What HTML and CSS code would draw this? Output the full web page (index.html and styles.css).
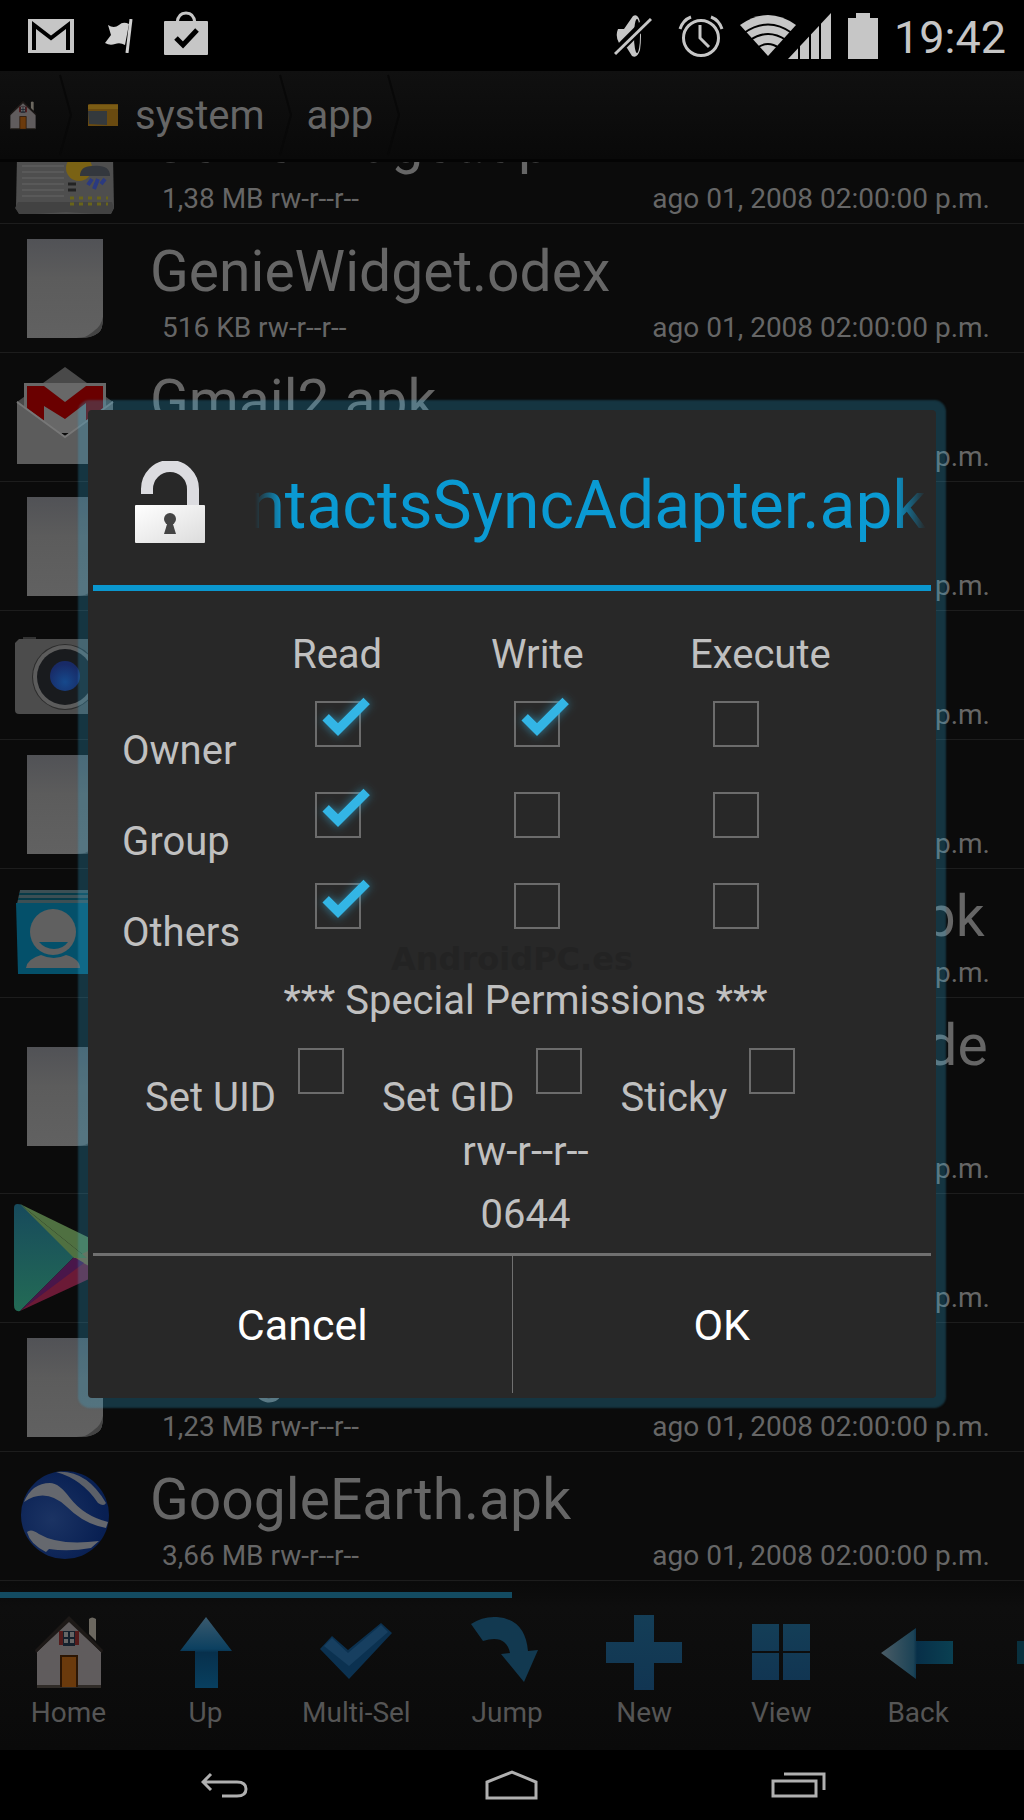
FILE: index.html
```html
<!DOCTYPE html>
<html lang="en">
<head>
  <meta charset="UTF-8">
  <meta name="viewport" content="width=device-width, initial-scale=1">
  <title>File Permissions</title>
  <link rel="stylesheet" href="styles.css">
</head>
<body>

  <!-- shared gradients and icons -->
  <svg class="defs" aria-hidden="true">
    <defs>
      <linearGradient id="paper" x1="0" y1="0" x2="0" y2="1">
        <stop offset="0" stop-color="#515256"/>
        <stop offset="0.4" stop-color="#5c5c5c"/>
        <stop offset="1" stop-color="#616161"/>
      </linearGradient>
      <linearGradient id="blueDown" x1="0" y1="0" x2="0" y2="1">
        <stop offset="0" stop-color="#3a5a6e"/>
        <stop offset="0.45" stop-color="#0c4060"/>
        <stop offset="0.5" stop-color="#07304c"/>
        <stop offset="1" stop-color="#083f5f"/>
      </linearGradient>
      <linearGradient id="blueLeft" x1="0" y1="0" x2="1" y2="0">
        <stop offset="0" stop-color="#4a5c66"/>
        <stop offset="0.45" stop-color="#1c4356"/>
        <stop offset="0.5" stop-color="#072f48"/>
        <stop offset="1" stop-color="#0a4052"/>
      </linearGradient>
      <linearGradient id="tile" x1="0" y1="0" x2="0" y2="1">
        <stop offset="0" stop-color="#143e57"/>
        <stop offset="1" stop-color="#113552"/>
      </linearGradient>
      <linearGradient id="metal" x1="0" y1="0" x2="1" y2="1">
        <stop offset="0" stop-color="#ffffff"/>
        <stop offset="1" stop-color="#dcdcdc"/>
      </linearGradient>
      <radialGradient id="globe" cx="0.35" cy="0.55" r="0.6">
        <stop offset="0" stop-color="#1b3363"/>
        <stop offset="1" stop-color="#081f52"/>
      </radialGradient>
      <radialGradient id="lens" cx="0.5" cy="0.7" r="0.6">
        <stop offset="0" stop-color="#16498c"/>
        <stop offset="1" stop-color="#182a66"/>
      </radialGradient>
      <linearGradient id="playLeft" x1="0" y1="0" x2="0" y2="1">
        <stop offset="0" stop-color="#174a5c"/>
        <stop offset="1" stop-color="#236b55"/>
      </linearGradient>
    </defs>
    <symbol id="file" viewBox="0 0 102 110">
      <path d="M13 6h76v78q0 13-5 16-6 5-22 5H13z" fill="url(#paper)"/>
      <path d="M89 84q0 13-5 16-6 5-16 5 8-3 13-8 6-4 8-13z" fill="#444"/>
    </symbol>
    <symbol id="house" viewBox="0 0 76 76">
      <path d="M58 5q3-3 7 0v22l-7-7z" fill="#6b675f"/>
      <path d="M38 6 70 38v35H6V38z" fill="#605c5d"/>
      <path d="M38 2 72 36l-1 3L38 8 5 39l-1-3z" fill="#1d1917"/>
      <path d="M6 71h64v3H6z" fill="#302c28"/>
      <path d="M28 17h20v14H28z" fill="#541b1b"/>
      <path d="M32 17h12v15H32z" fill="#14202c"/>
      <path d="M33 18h4v5h-4zM39 18h4v5h-4zM33 25h4v4h-4zM39 25h4v4h-4z" fill="#666"/>
      <path d="M29 41h18v32H29z" fill="#2c1604"/>
      <path d="M31 43h14v30H31z" fill="#6b3a0c"/>
    </symbol>
  </svg>

  <header class="status-bar">
    <div class="notifications">
      <svg class="ic-gmail" viewBox="0 0 46 34"><path d="M0 0h46v34H0z" fill="#c6c6c6"/><path d="M6 31V6l17 13L40 6v25" fill="none" stroke="#000" stroke-width="4"/></svg>
      <svg class="ic-flag" viewBox="0 0 28 34"><path d="M3 6q6 4 11 0 4-4 10-1l-4 21q-5-3-10-1-5 2-10-1l6-8z" fill="#d0d0d0"/><path d="M26 0 22 34" stroke="#d0d0d0" stroke-width="3"/></svg>
      <svg class="ic-bag" viewBox="0 0 44 44"><path d="M13 12Q14 2 22 2t9 10" fill="none" stroke="#c6c6c6" stroke-width="3"/><rect y="10" width="44" height="34" rx="1" fill="#c6c6c6"/><path d="m12 27 7 7 14-15" fill="none" stroke="#000" stroke-width="5"/></svg>
    </div>
    <div class="system-icons">
      <svg class="ic-mute" viewBox="0 0 38 44"><path d="M4 15h6L19 2q5-3 7 6 2 14 0 28-3 9-8 6l-5-8-8-5q-4-7-1-14z" fill="#c6c6c6"/><ellipse cx="23" cy="22" rx="3" ry="17" fill="#000"/><path d="M38 2 0 40" stroke="#000" stroke-width="9"/><path d="M37 5 1 40" stroke="#c6c6c6" stroke-width="3"/></svg>
      <svg class="ic-alarm" viewBox="0 0 46 42" fill="none" stroke="#c6c6c6" stroke-width="3"><circle cx="23" cy="23" r="17.500"/><path d="M22 10v13l9 9M2 14Q5 5 13 2M44 14Q41 5 33 2"/></svg>
      <svg class="ic-signal" viewBox="0 0 92 46">
        <path d="M0 12Q28-8 56 12L28 43z" fill="#c6c6c6"/>
        <path d="M4 20Q28 3 52 20M10 27Q28 15 46 27M17 35Q28 27 39 35" fill="none" stroke="#000" stroke-width="2"/>
        <path d="m48 46 43-46v46z" fill="#c6c6c6"/>
        <path d="M59 10v36M70 10v36M80 8v38" stroke="#000" stroke-width="2"/>
      </svg>
      <svg class="ic-battery" viewBox="0 0 30 46"><path d="M8 0h14v5h8v41H0V5h8z" fill="#c6c6c6"/></svg>
      <time class="clock">19:42</time>
    </div>
  </header>

  <nav class="breadcrumb">
    <a href="#" aria-label="Home"><svg class="crumb-home"><use href="#house"/></svg></a>
    <svg class="chevron" viewBox="0 0 14 82"><path d="m1 1 11 40L1 81"/></svg>
    <a href="#"><svg class="crumb-folder" viewBox="0 0 32 24"><path d="M1 2q0-1 2-1h28v22H1z" fill="#694a10"/><path d="M1 2h30v4H1z" fill="#7b5c14"/><path d="M1 8h19v14l-18-1z" fill="#34393d"/></svg>system</a>
    <svg class="chevron" viewBox="0 0 14 82"><path d="m1 1 11 40L1 81"/></svg>
    <a href="#">app</a>
    <svg class="chevron" viewBox="0 0 14 82"><path d="m1 1 11 40L1 81"/></svg>
  </nav>

  <main class="file-list">
    <div class="row">
      <svg class="row-icon" viewBox="0 0 102 110">
        <path d="M4 0h94l2 104-4 8H6l-4-8z" fill="#4e4e4e"/>
        <path d="M4 98h94l2 6-4 7-44-3-46 3-5-7z" fill="#424242"/>
        <path d="M8 62h42M8 68h42M8 74h42M8 80h42M8 86h42M8 92h42" stroke="#595959" stroke-width="2"/>
        <circle cx="65" cy="64" r="13" fill="#7a6214"/>
        <path d="M66 72q0-10 12-10 18-2 18 10z" fill="#33373d"/>
        <path d="m78 75-4 6m10-6-4 10m11-10-4 5" stroke="#2b3a80" stroke-width="4"/>
        <path d="M56 94h38M56 100h38" stroke="#69641a" stroke-width="3" stroke-dasharray="4 5"/>
        <path d="M54 80h8M54 86h8" stroke="#222" stroke-width="3"/>
      </svg>
      <div class="info">
        <div class="name">GenieWidget.apk</div>
        <div class="meta"><span>1,38 MB rw-r--r--</span><span>ago 01, 2008 02:00:00 p.m.</span></div>
      </div>
    </div>
    <div class="row">
      <svg class="row-icon"><use href="#file"/></svg>
      <div class="info">
        <div class="name">GenieWidget.odex</div>
        <div class="meta"><span>516 KB rw-r--r--</span><span>ago 01, 2008 02:00:00 p.m.</span></div>
      </div>
    </div>
    <div class="row">
      <svg class="row-icon" viewBox="0 0 102 110">
        <path d="m3 40 48-35 48 35v10H3z" fill="#494949"/>
        <path d="M10 21h82v50H10z" fill="#686868"/>
        <path d="M13 24h17l21 16 21-16h17v34L72 68V41L51 57 30 44v18L13 50z" fill="#6a0000"/>
        <path d="M13 24h10v32l-10-7zM79 24h10v27l-10 7z" fill="#6a0000"/>
        <path d="m3 39 48 35 48-35v63H3z" fill="#5c5c5c"/>
        <path d="m3 40 48 35 48-35" fill="none" stroke="#777" stroke-width="2"/>
      </svg>
      <div class="info">
        <div class="name">Gmail2.apk</div>
        <div class="meta"><span>4,41 MB rw-r--r--</span><span>ago 01, 2008 02:00:00 p.m.</span></div>
      </div>
    </div>
    <div class="row">
      <svg class="row-icon"><use href="#file"/></svg>
      <div class="info">
        <div class="name">Gmail2.odex</div>
        <div class="meta"><span>2,10 MB rw-r--r--</span><span>ago 01, 2008 02:00:00 p.m.</span></div>
      </div>
    </div>
    <div class="row">
      <svg class="row-icon" viewBox="0 0 102 110">
        <path d="M9 17h13v5H9z" fill="#333"/>
        <path d="M5 19h92q4 0 4 4v67q0 4-4 4H5q-4 0-4-4V23z" fill="#4c4c4c"/>
        <circle cx="51" cy="57" r="33" fill="#2c2c2c"/>
        <circle cx="51" cy="57" r="32" fill="#5c5c5c"/>
        <circle cx="51" cy="57" r="28" fill="#191b1e"/>
        <circle cx="51" cy="56" r="15" fill="url(#lens)"/>
      </svg>
      <div class="info">
        <div class="name">GoogleCamera.apk</div>
        <div class="meta"><span>5,02 MB rw-r--r--</span><span>ago 01, 2008 02:00:00 p.m.</span></div>
      </div>
    </div>
    <div class="row">
      <svg class="row-icon"><use href="#file"/></svg>
      <div class="info">
        <div class="name">GoogleCamera.odex</div>
        <div class="meta"><span>1,77 MB rw-r--r--</span><span>ago 01, 2008 02:00:00 p.m.</span></div>
      </div>
    </div>
    <div class="row">
      <svg class="row-icon" viewBox="0 0 102 110">
        <path d="M6 12h92v14H3z" fill="#3c4f54"/>
        <path d="M5 16h94M4 21h96" stroke="#083b48" stroke-width="2"/>
        <path d="M2 25h98l-1 71H4z" fill="#04506a"/>
        <circle cx="39" cy="54" r="23" fill="#606060"/>
        <path d="M25 64h29q-5 7-14 7t-15-7z" fill="#04506a"/>
        <path d="M12 90q1-9 15-13 13 6 25 0 14 4 14 13z" fill="#606060"/>
      </svg>
      <div class="info">
        <div class="name">GoogleContactsSyncAdapter.apk</div>
        <div class="meta"><span>98 KB rw-r--r--</span><span>ago 01, 2008 02:00:00 p.m.</span></div>
      </div>
    </div>
    <div class="row">
      <svg class="row-icon"><use href="#file"/></svg>
      <div class="info">
        <div class="name">GoogleContactsSyncAdapter.odex</div>
        <div class="meta"><span>214 KB rw-r--r--</span><span>ago 01, 2008 02:00:00 p.m.</span></div>
      </div>
    </div>
    <div class="row">
      <svg class="row-icon" viewBox="0 0 102 110">
        <path d="m6 1 82 40-15 14z" fill="#4f7041"/>
        <path d="m6 108 82-38-15-15z" fill="#6b1a36"/>
        <path d="M88 41q18 10 0 29L60 55z" fill="#76603a"/>
        <path d="M0 5q0-6 8-3l52 52L6 108q-6 1-6-6z" fill="url(#playLeft)"/>
        <path d="m60 54 10 6-64 48z" fill="#49164a"/>
        <path d="M6 1 73 55H60z" fill="#4f7041"/>
      </svg>
      <div class="info">
        <div class="name">GoogleServices.apk</div>
        <div class="meta"><span>3,30 MB rw-r--r--</span><span>ago 01, 2008 02:00:00 p.m.</span></div>
      </div>
    </div>
    <div class="row">
      <svg class="row-icon"><use href="#file"/></svg>
      <div class="info">
        <div class="name">GoogleServices.odex</div>
        <div class="meta"><span>1,23 MB rw-r--r--</span><span>ago 01, 2008 02:00:00 p.m.</span></div>
      </div>
    </div>
    <div class="row">
      <svg class="row-icon" viewBox="0 0 102 110">
        <circle cx="51" cy="54" r="44" fill="url(#globe)"/>
        <path d="M10 41Q18 22 36 22 45 22 56 37 70 55 94 61l-2 6Q70 63 53 46 32 26 10 41z" fill="#65686e"/>
        <path d="M42 11Q72 8 92 42 90 46 84 42 68 18 42 11z" fill="#5c6068"/>
        <path d="M13 71q4-4 12 2 20 12 60 7l-8 7q-22 4-42 1l-3 3Q16 83 13 71z" fill="#65686e"/>
      </svg>
      <div class="info">
        <div class="name">GoogleEarth.apk</div>
        <div class="meta"><span>3,66 MB rw-r--r--</span><span>ago 01, 2008 02:00:00 p.m.</span></div>
      </div>
    </div>
  </main>

  <footer class="toolbar">
    <div class="pager"></div>
    <div class="tools">
      <button type="button"><svg><use href="#house"/></svg>Home</button>
      <button type="button"><svg viewBox="0 0 76 76"><path d="m38 3 26 34H50v37H27V37H12z" fill="url(#blueDown)"/></svg>Up</button>
      <button type="button"><svg viewBox="0 0 76 76"><path d="M2 35 14 22l16 14L63 9l11 10-43 46z" fill="#0b3150"/><path d="m6 32 8-8 16 15L63 11l7 7-39 34z" fill="#173f60"/></svg>Multi-Sel</button>
      <button type="button"><svg viewBox="0 0 76 76"><path d="M2 10Q14 2 28 3q28 2 31 34l10-1-14 32-23-28 9-1Q37 20 14 27z" fill="#123950"/></svg>Jump</button>
      <button type="button"><svg viewBox="0 0 76 76"><path d="M28 1h20v27h28v21H48v27H28V49H0V28h28z" fill="url(#tile)"/></svg>New</button>
      <button type="button"><svg viewBox="0 0 76 76"><path d="M9 10h27v27H9zM40 10h27v27H40zM9 39h27v27H9zM40 39h27v27H40z" fill="url(#tile)"/></svg>View</button>
      <button type="button"><svg viewBox="0 0 76 76"><path d="m1 39 35-25v13h37v23H36v15z" fill="url(#blueLeft)"/></svg>Back</button>
      <button type="button"><svg viewBox="0 0 76 76"><path d="M75 39 40 14v13H0v23h40v15z" fill="#08303e"/></svg>Next</button>
    </div>
  </footer>

  <nav class="nav-bar">
    <button type="button" aria-label="Back"><svg class="nav-back" viewBox="0 0 48 26"><path d="M10 2 2 10l8 8M3 10h33q9 0 9 7t-9 7H21"/></svg></button>
    <button type="button" aria-label="Home"><svg class="nav-home" viewBox="0 0 54 30"><path d="M2 28V12L27 2l24 10v16z"/></svg></button>
    <button type="button" aria-label="Recent apps"><svg class="nav-recent" viewBox="0 0 56 26"><path d="M2 9h43v15H2zM13 2h40v16"/></svg></button>
  </nav>

  <div class="overlay">
    <form class="dialog" role="dialog" aria-labelledby="dialog-title">
      <div class="dialog-header">
        <svg class="lock" viewBox="0 0 70 82">
          <path d="M12 33v-5a22 22 0 0 1 46 0v18" fill="none" stroke="#dcdce0" stroke-width="12"/>
          <rect y="44" width="70" height="38" rx="1" fill="url(#metal)"/>
          <circle cx="35" cy="58" r="6" fill="#444"/>
          <path d="M33 60h4l4 13H29z" fill="#444"/>
        </svg>
        <h1 class="title" id="dialog-title"><span>GoogleContactsSyncAdapter.apk</span></h1>
      </div>

      <div class="dialog-body">
        <table class="permissions">
          <thead>
            <tr><td></td><th scope="col">Read</th><th scope="col">Write</th><th scope="col">Execute</th></tr>
          </thead>
          <tbody>
            <tr>
              <th scope="row">Owner</th>
              <td><input type="checkbox" aria-label="Owner read" checked></td>
              <td><input type="checkbox" aria-label="Owner write" checked></td>
              <td><input type="checkbox" aria-label="Owner execute"></td>
            </tr>
            <tr>
              <th scope="row">Group</th>
              <td><input type="checkbox" aria-label="Group read" checked></td>
              <td><input type="checkbox" aria-label="Group write"></td>
              <td><input type="checkbox" aria-label="Group execute"></td>
            </tr>
            <tr>
              <th scope="row">Others</th>
              <td><input type="checkbox" aria-label="Others read" checked></td>
              <td><input type="checkbox" aria-label="Others write"></td>
              <td><input type="checkbox" aria-label="Others execute"></td>
            </tr>
          </tbody>
        </table>
        <span class="watermark">AndroidPC.es</span>
        <p class="special-title">*** Special Permissions ***</p>
        <div class="special">
          <label><span>Set UID</span><input type="checkbox"></label>
          <label><span>Set GID</span><input type="checkbox"></label>
          <label><span>Sticky</span><input type="checkbox"></label>
        </div>
        <output class="mode">rw-r--r--</output>
        <output class="mode">0644</output>
      </div>

      <div class="actions">
        <button type="button">Cancel</button>
        <button type="button">OK</button>
      </div>
    </form>
  </div>

</body>
</html>
```

FILE: styles.css
```css
*,
*::after {
  box-sizing: border-box;
}

body {
  margin: 0;
  height: 100vh;
  display: flex;
  flex-direction: column;
  position: relative;
  overflow: hidden;
  background: #000;
  color: #666;
  font-family: Roboto, sans-serif;
}

button {
  border: 0;
  padding: 0;
  background: none;
  font-family: inherit;
}

svg {
  display: block;
  flex: none;
}

.defs {
  position: absolute;
  width: 0;
  height: 0;
}

/* status bar */
.status-bar {
  flex: none;
  height: 71px;
  padding: 0 18px 0 28px;
  display: flex;
  justify-content: space-between;
}

.notifications,
.system-icons {
  display: flex;
  align-items: center;
}

.notifications {
  gap: 31px;
}

.system-icons {
  gap: 16px;
}

.ic-gmail { width: 46px; height: 34px; }
.ic-flag { width: 28px; height: 34px; }
.ic-bag { width: 44px; height: 44px; margin-bottom: 6px; }
.ic-mute { width: 38px; height: 44px; margin-right: 10px; }
.ic-alarm { width: 46px; height: 42px; }
.ic-signal { width: 92px; height: 46px; }
.ic-battery { width: 30px; height: 46px; }

.clock {
  color: #c6c6c6;
  font-size: 45px;
  line-height: 54px;
  padding-top: 4px;
}

/* path */
.breadcrumb {
  flex: none;
  height: 91px;
  padding: 0 8px;
  display: flex;
  align-items: center;
  gap: 14px;
  background: linear-gradient(#101010, #090909);
  border-bottom: 3px solid #040404;
}

.breadcrumb a {
  display: flex;
  align-items: center;
  gap: 16px;
  color: #666;
  font-size: 40px;
  text-decoration: none;
}

.crumb-home { width: 30px; height: 32px; margin-right: 7px; }
.crumb-folder { width: 32px; height: 24px; }

.chevron {
  width: 14px;
  height: 82px;
  fill: none;
  stroke: #080808;
  stroke-width: 2;
}

/* file list, scrolled so that the last row sits on the toolbar */
.file-list {
  flex: 1;
  min-height: 0;
  overflow: hidden;
  display: flex;
  flex-direction: column;
  justify-content: flex-end;
  padding-bottom: 1px;
  background: #0b0b0b;
}

.row {
  flex: none;
  display: flex;
  align-items: center;
  gap: 34px;
  padding: 14px 14px 8px;
  border-bottom: 1px solid #1d1d1d;
}

.row-icon {
  width: 102px;
  height: 110px;
  margin: -6px 0 0;
}

.info {
  flex: 1;
  min-width: 0;
}

.name {
  font-size: 57px;
  line-height: 67px;
  word-break: break-all;
}

.meta {
  display: flex;
  justify-content: space-between;
  margin-top: 6px;
  padding: 0 20px 0 12px;
  font-size: 28px;
  line-height: 33px;
}

/* toolbar */
.toolbar {
  flex: none;
  overflow: hidden;
  padding: 10px 0 21px;
  background: linear-gradient(#0a0a0a, #0e0e0e 15%, #0a0a0a);
}

.pager {
  width: 50%;
  height: 6px;
  background: #134b61;
}

.tools {
  display: flex;
  padding-top: 16px;
}

.tools button {
  flex: none;
  min-width: 137px;
  padding: 0 28px;
  display: flex;
  flex-direction: column;
  align-items: center;
  gap: 6px;
  color: #555;
  font-size: 28px;
  line-height: 33px;
}

.tools svg {
  width: 76px;
  height: 76px;
}

/* system navigation */
.nav-bar {
  flex: none;
  height: 70px;
  display: flex;
  justify-content: center;
}

.nav-bar button {
  width: 28%;
  display: flex;
  align-items: center;
  justify-content: center;
}

.nav-bar svg {
  fill: none;
  stroke: #b0b0b0;
  stroke-width: 3;
}

.nav-back { width: 48px; height: 26px; }
.nav-home { width: 54px; height: 30px; }
.nav-recent { width: 56px; height: 26px; }

/* permissions dialog */
.overlay {
  position: absolute;
  inset: 0;
  display: flex;
  align-items: center;
  padding: 0 88px 12px;
}

.dialog {
  flex: 1;
  min-width: 0;
  padding: 0 5px 5px;
  border-radius: 4px;
  background: #282828;
  color: #c0c0c0;
  box-shadow: 0 0 2px 10px rgba(51, 181, 229, 0.25);
}

.dialog-header {
  height: 181px;
  padding: 8px 5px 0 42px;
  display: flex;
  align-items: center;
  gap: 50px;
  border-bottom: 6px solid #0a97cf;
}

.lock {
  width: 70px;
  height: 82px;
}

.title {
  flex: 1;
  min-width: 0;
  margin: 0;
  padding-top: 8px;
  overflow: hidden;
  display: flex;
  justify-content: flex-end;
  color: #0a9ad3;
  font-size: 66px;
  font-weight: 400;
  line-height: 76px;
  -webkit-mask-image: linear-gradient(to right, transparent, #000 28px, #000 calc(100% - 32px), transparent);
  mask-image: linear-gradient(to right, transparent, #000 28px, #000 calc(100% - 32px), transparent);
}

.dialog-body {
  position: relative;
  padding: 40px 0 15px 27px;
  font-size: 40px;
  line-height: 47px;
}

.permissions {
  width: 100%;
  table-layout: fixed;
  border-collapse: collapse;
}

.permissions th,
.permissions td {
  padding: 0 0 0 2px;
  text-align: left;
  vertical-align: top;
  font-weight: 400;
}

.permissions thead td { width: 170px; }
.permissions thead th { width: 199px; }
.permissions thead th:last-child { width: auto; }
.permissions thead tr { height: 59px; }
.permissions tbody tr { height: 91px; }
.permissions tbody th { padding-top: 37px; }
.permissions tbody td { padding: 11px 0 0 25px; }

.dialog input {
  -webkit-appearance: none;
  appearance: none;
  display: block;
  position: relative;
  width: 46px;
  height: 46px;
  margin: 0;
  border: 2px solid #6c6c6c;
}

.dialog input:checked::after {
  content: "";
  position: absolute;
  left: -1px;
  top: -12px;
  width: 22px;
  height: 45px;
  border: solid #33b5e5;
  border-width: 0 9px 9px 0;
  transform: rotate(45deg);
  transform-origin: 100% 100%;
  filter: drop-shadow(0 0 5px rgba(51, 181, 229, 0.6));
}

.watermark {
  position: absolute;
  left: 0;
  right: 0;
  top: 350px;
  text-align: center;
  color: #232323;
  font: bold 32px/36px "DejaVu Sans", sans-serif;
}

.special-title {
  margin: 14px 0 24px;
  text-align: center;
}

.special {
  display: flex;
  gap: 38px;
  padding-left: 25px;
}

.special label {
  display: flex;
  gap: 22px;
}

.special span {
  padding-top: 26px;
}

.mode {
  display: block;
  margin-top: 7px;
  text-align: center;
}

.mode + .mode {
  margin-top: 16px;
}

.actions {
  display: flex;
  border-top: 3px solid #707070;
}

.actions button {
  flex: 1;
  height: 137px;
  color: #fff;
  font-size: 43px;
}

.actions button + button {
  border-left: 1px solid #707070;
}
```
